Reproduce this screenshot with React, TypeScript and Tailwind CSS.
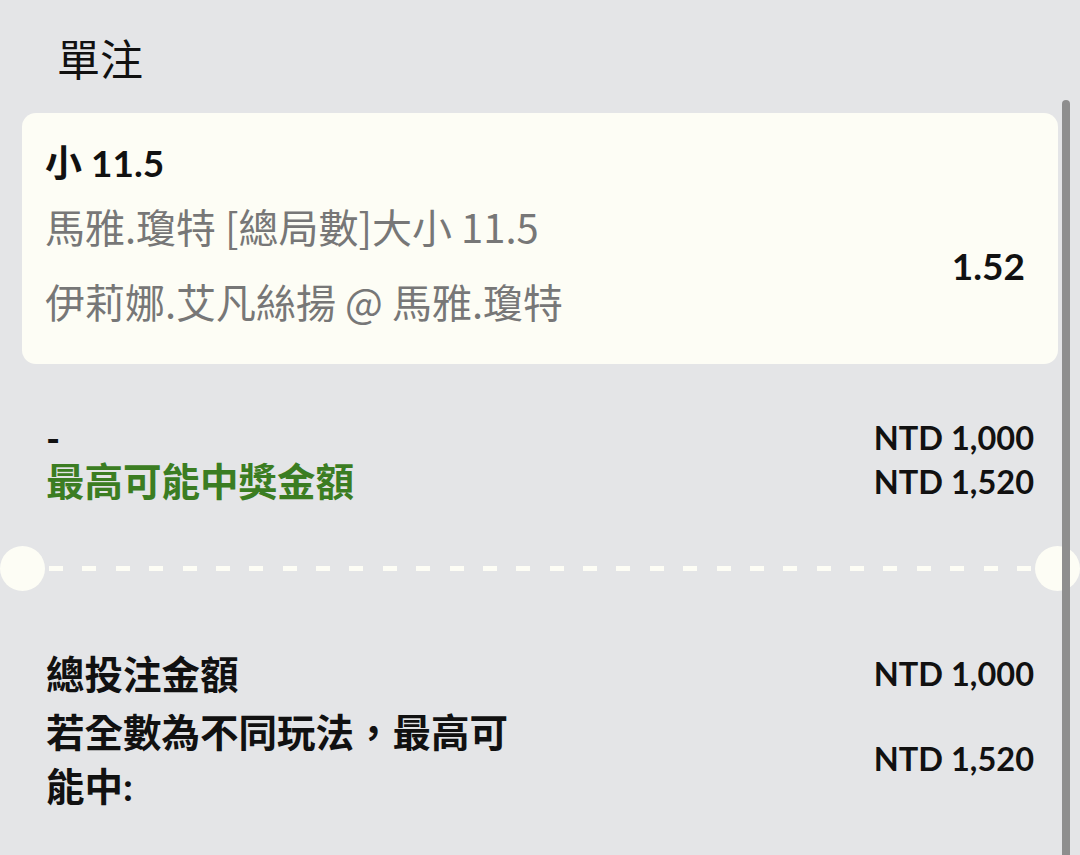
const latoCjk = "font-['Lato','Noto_Sans_CJK_TC',sans-serif]";

function Dashes() {
  const dashes = Array.from({ length: 30 });
  return (
    <div className="flex flex-1 items-center justify-between px-[4px]">
      {dashes.map((_, i) => (
        <span key={i} className="block h-[5px] w-[14px] bg-[#fdfdf5]" />
      ))}
    </div>
  );
}

export default function App() {
  return (
    <div className="relative h-[855px] w-[1080px] overflow-hidden bg-[#e4e5e7] font-['Noto_Sans_CJK_TC',sans-serif] text-[#111]">
      {/* 標題 */}
      <div className="px-[57px] pt-[32px] pb-[31px]">
        <h1 className="text-[43px] leading-[50px] font-normal">單注</h1>
      </div>

      {/* 投注卡片 */}
      <div className="mx-[22px] rounded-[14px] bg-[#fdfdf5] pt-[28px] pr-[33px] pb-[38px] pl-[23px]">
        <p className={`${latoCjk} text-[37px] leading-[44px] font-bold`}>小 11.5</p>
        <div className="flex items-center justify-between">
          <div className="text-[40px] leading-[50px] text-[#777]">
            <p className="mt-[16px]">馬雅.瓊特 [總局數]大小 11.5</p>
            <p className="mt-[25px]">伊莉娜.艾凡絲揚 @ 馬雅.瓊特</p>
          </div>
          <p className="pt-[20px] font-['Lato',sans-serif] text-[37px] font-bold">1.52</p>
        </div>
      </div>

      {/* 可能中獎 */}
      <div className={`${latoCjk} mt-[52px] px-[46px] font-bold`}>
        <div className="flex h-[44px] items-center justify-between">
          <span className="text-[38px]">-</span>
          <span className="text-[32.5px]">NTD 1,000</span>
        </div>
        <div className="flex h-[44px] items-center justify-between">
          <span className="text-[38.5px] text-[#3b7d22]">最高可能中獎金額</span>
          <span className="text-[32.5px]">NTD 1,520</span>
        </div>
      </div>

      {/* 分隔線 */}
      <div className="mt-[42px] flex h-[45px] items-center">
        <span className="block h-[45px] w-[45px] shrink-0 rounded-full bg-[#fdfdf5]" />
        <Dashes />
        <span className="block h-[45px] w-[45px] shrink-0 rounded-full bg-[#fdfdf5]" />
      </div>

      {/* 總計 */}
      <div className={`${latoCjk} mt-[56px] px-[46px] font-bold`}>
        <div className="flex items-center justify-between">
          <span className="text-[38.5px] leading-[54px]">總投注金額</span>
          <span className="text-[32.5px]">NTD 1,000</span>
        </div>
        <div className="mt-[4px] flex items-center justify-between">
          <span className="w-[480px] text-[38.5px] leading-[54px]">若全數為不同玩法，最高可能中:</span>
          <span className="text-[32.5px]">NTD 1,520</span>
        </div>
      </div>

      {/* 捲軸 */}
      <div className="absolute top-[100px] right-[10px] bottom-0 w-[8px] rounded-t-full bg-[#8e8e8e]" />
    </div>
  );
}
